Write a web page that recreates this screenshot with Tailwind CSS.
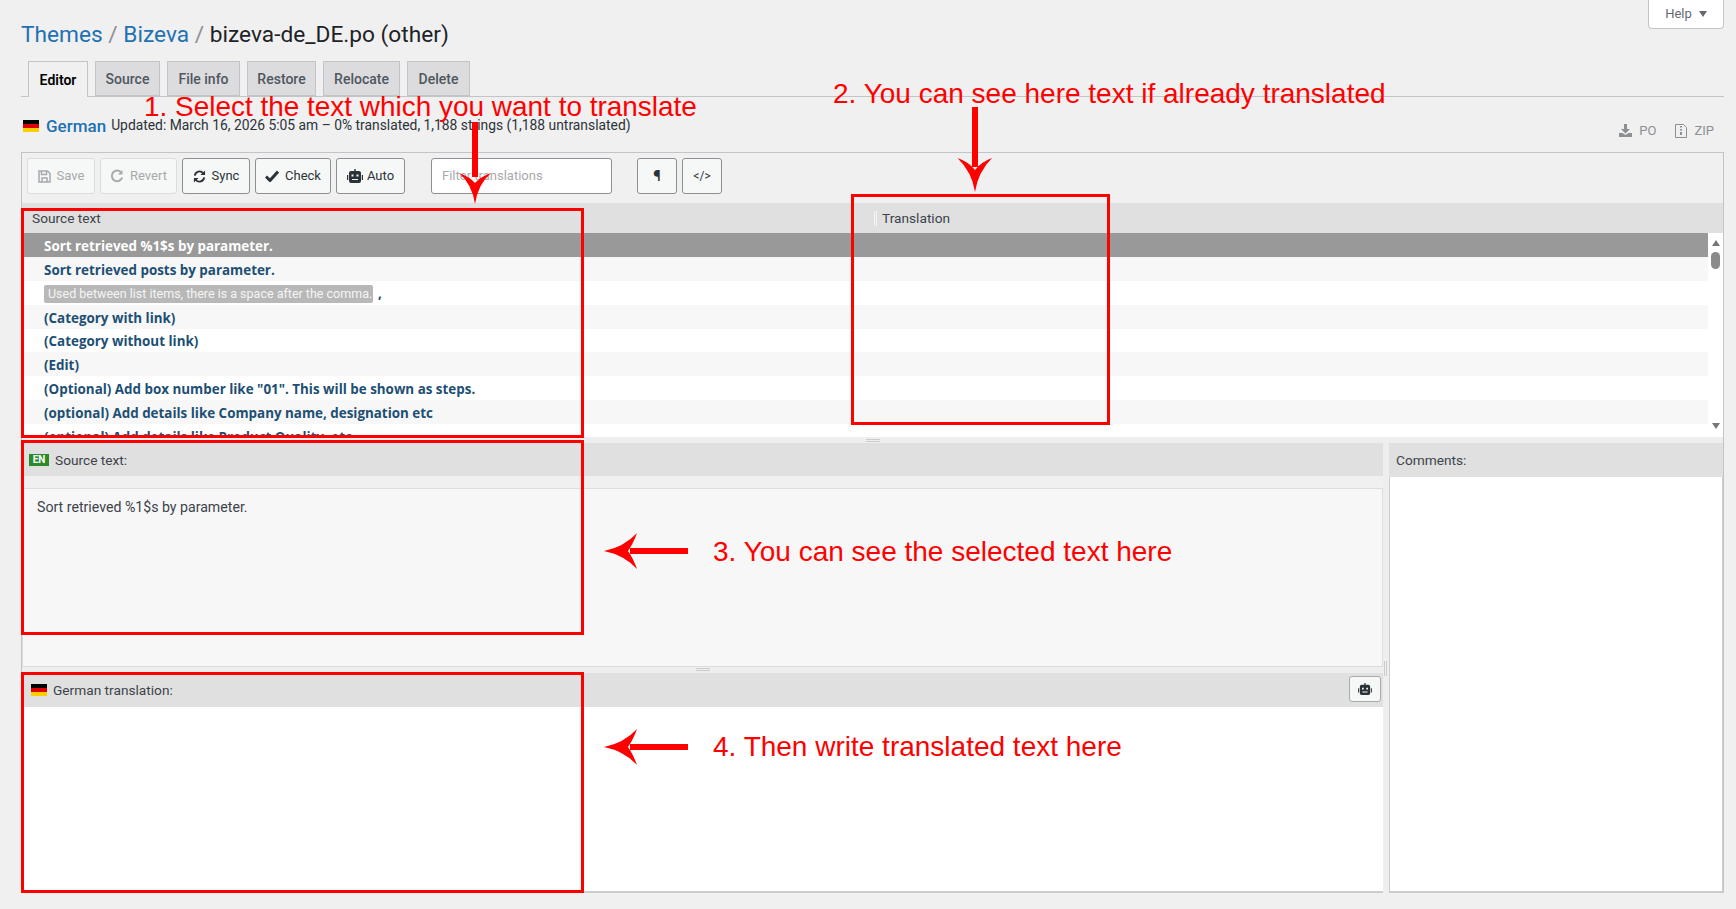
<!DOCTYPE html>
<html lang="en">
<head>
  <meta charset="UTF-8" />
  <title>Edit translation</title>
  <script src="https://cdn.jsdelivr.net/npm/@tailwindcss/browser@4"></script>
</head>
<body class="relative bg-[#f0f0f1] h-[909px] overflow-hidden font-[Roboto,sans-serif] text-[13.7px] text-[#3c434a]">
  <div class="pl-[21px] pr-[12px]">
    <!-- title -->
    <div class="flex justify-between items-start h-[61px]">
      <h1 class="text-[22.7px] leading-[29px] pt-[20px] text-[#1d2327]"><span class="text-[#2271b1]">Themes</span> <span class="text-[#8c8f94]">/</span> <span class="text-[#2271b1]">Bizeva</span> <span class="text-[#8c8f94]">/</span> bizeva-de_DE.po (other)</h1>
      <div class="w-[76px] h-[29px] bg-white border border-t-0 border-[#c3c4c7] rounded-b flex items-center justify-center gap-[7px] text-[13px] text-[#646970]">Help <span class="w-0 h-0 border-x-[4px] border-x-transparent border-t-[6px] border-t-[#646970]"></span></div>
    </div>

    <!-- tabs -->
    <div class="flex gap-[7px] h-[36px] pl-[7px] border-b border-[#c3c4c7] font-medium text-[14px] text-[#50575e]">
      <div class="w-[60px] h-[36px] pt-[2px] bg-[#f0f0f1] border border-b-0 border-[#c3c4c7] flex items-center justify-center font-semibold text-[#000]">Editor</div>
      <div class="w-[65px] h-[35px] pt-[2px] bg-[#dcdcde] border border-[#c3c4c7] flex items-center justify-center">Source</div>
      <div class="w-[73px] h-[35px] pt-[2px] bg-[#dcdcde] border border-[#c3c4c7] flex items-center justify-center">File info</div>
      <div class="w-[69px] h-[35px] pt-[2px] bg-[#dcdcde] border border-[#c3c4c7] flex items-center justify-center">Restore</div>
      <div class="w-[77px] h-[35px] pt-[2px] bg-[#dcdcde] border border-[#c3c4c7] flex items-center justify-center">Relocate</div>
      <div class="w-[63px] h-[35px] pt-[2px] bg-[#dcdcde] border border-[#c3c4c7] flex items-center justify-center">Delete</div>
    </div>

    <!-- locale line -->
    <div class="flex items-center h-[55px] pt-[3px]">
      <span class="flex flex-col w-[16px] h-[12px] ml-[2px] mr-[7px]"><i class="h-[4px] bg-black"></i><i class="h-[4px] bg-[#dd0000]"></i><i class="h-[4px] bg-[#ffce00]"></i></span>
      <span class="text-[17px] font-medium text-[#2271b1] mr-[5px] pt-[1px]">German</span>
      <span class="text-[#2c3338] text-[13.85px] -mt-[1px]">Updated: March 16, 2026 5:05 am – 0% translated, 1,188 strings (1,188 untranslated)</span>
      <div class="ml-auto flex items-center text-[#8c8f94] mr-[10px] mt-[9px] text-[13px]">
        <svg class="w-[13px] h-[13px] mr-[7px]" viewBox="0 0 13 13" fill="#8c8f94"><path d="M5 0h3v5h3L6.500 9.500 2 5h3z"/><path d="M0 9h3.500l3 2 3-2H13v4H0z"/></svg>
        <span class="mr-[19px]">PO</span>
        <svg class="w-[12px] h-[14px] mr-[7px]" viewBox="0 0 12 14" fill="none" stroke="#8c8f94"><path d="M.500.500h8l3 3v10h-11z"/><path d="M5 2h2v1.500H5zM5 5h2v1.500H5zM5 8h2v3H5z" fill="#8c8f94" stroke="none"/></svg>
        <span>ZIP</span>
      </div>
    </div>

    <!-- editor -->
    <div class="h-[741px] border-t border-x border-[#c3c4c7]">
      <div class="flex items-center h-[50px] pb-[4px] pl-[5px] text-[13px]">
        <div class="flex gap-[5px]">
          <button class="flex items-center justify-center gap-[6px] w-[68px] h-[36px] rounded-[3px] border border-[#dcdcde] bg-[#f6f7f7] text-[#a7aaad]">
            <svg class="w-[13px] h-[13px]" viewBox="0 0 13 13" fill="none" stroke="#a7aaad" stroke-width="1.500"><path d="M1 1h8.500L12 3.500V12H1z"/><path d="M3.500 1v3.500h5V1M4 12V8h5v4"/></svg>Save</button>
          <button class="flex items-center justify-center gap-[6px] w-[77px] h-[36px] rounded-[3px] border border-[#dcdcde] bg-[#f6f7f7] text-[#a7aaad]">
            <svg class="w-[14px] h-[14px]" viewBox="0 0 14 14" fill="none" stroke="#a7aaad" stroke-width="2"><path d="M11 3.200A5.300 5.300 0 1 0 12.200 8.500"/><path d="M12.500 1v4.500H8" fill="#a7aaad" stroke="none"/></svg>Revert</button>
          <button class="flex items-center justify-center gap-[6px] w-[68px] h-[36px] rounded-[3px] border border-[#8c8f94] bg-[#f6f7f7] text-[#2c3338]">
            <svg class="w-[13px] h-[13px]" viewBox="0 0 14 14" fill="none" stroke="#2c3338" stroke-width="2"><path d="M2 6a5 5 0 0 1 9-2.500M12 8a5 5 0 0 1-9 2.500"/><path d="M13 .500v5H8zM1 13.500v-5h5z" fill="#2c3338" stroke="none"/></svg>Sync</button>
          <button class="flex items-center justify-center gap-[6px] w-[76px] h-[36px] rounded-[3px] border border-[#8c8f94] bg-[#f6f7f7] text-[#2c3338]">
            <svg class="w-[14px] h-[12px]" viewBox="0 0 14 12" fill="none" stroke="#2c3338" stroke-width="3"><path d="M1 6.500 5 10.500 13 1.500"/></svg>Check</button>
          <button class="flex items-center justify-center gap-[4px] w-[69px] h-[36px] rounded-[3px] border border-[#8c8f94] bg-[#f6f7f7] text-[#2c3338]">
            <svg class="w-[16px] h-[14px]" viewBox="0 0 16 14" fill="#2c3338"><path d="M7.300 0h1.400v2h3.300a2 2 0 0 1 2 2v8a2 2 0 0 1-2 2H4a2 2 0 0 1-2-2V4a2 2 0 0 1 2-2h3.300z"/><path d="M0 6h1.200v5H0zM14.800 6H16v5h-1.200z"/><path d="M4.500 5.500h2v2h-2zM9.500 5.500h2v2h-2zM5 10h6v1H5z" fill="#f6f7f7"/></svg>Auto</button>
        </div>
        <div class="w-[181px] h-[36px] ml-[26px] rounded-[3px] border border-[#8c8f94] bg-white flex items-center pl-[10px] text-[#a7aaad]">Filter translations</div>
        <button class="w-[40px] h-[36px] ml-[25px] rounded-[3px] border border-[#8c8f94] bg-[#f6f7f7] font-bold text-[15px] text-[#2c3338]">¶</button>
        <button class="w-[40px] h-[36px] ml-[5px] rounded-[3px] border border-[#8c8f94] bg-[#f6f7f7] text-[#2c3338] text-[12px]">&lt;/&gt;</button>
      </div>

      <!-- list header -->
      <div class="flex h-[30px] bg-[#e0e0e0] items-center pt-[1px]">
        <div class="w-[852px] pl-[10px]">Source text</div>
        <div class="w-[3px] h-[15px] border-x border-[#f5f5f5]"></div>
        <div class="pl-[5px]">Translation</div>
      </div>

      <!-- list -->
      <div class="flex h-[204px] overflow-hidden font-bold text-[13.4px] font-['Open_Sans',sans-serif] text-[#1d4f74]">
        <div class="flex-1 min-w-0">
          <div class="h-[24px] pl-[22px] pt-[2px] flex items-center bg-[#999999] text-white">Sort retrieved %1$s by parameter.</div>
          <div class="h-[24px] pl-[22px] pt-[2px] flex items-center bg-[#f7f7f7]">Sort retrieved posts by parameter.</div>
          <div class="h-[24px] pl-[22px] pt-[1px] flex items-center bg-white"><span class="h-[18px] w-[329px] bg-[#b8b8b8] rounded-[2px] text-[#f5f5f5] font-normal text-[12.5px] font-[Roboto,sans-serif] pl-[4px] leading-[18px] mr-[5px]">Used between list items, there is a space after the comma.</span>,</div>
          <div class="h-[24px] pl-[22px] pt-[2px] flex items-center bg-[#f7f7f7]">(Category with link)</div>
          <div class="h-[23px] pl-[22px] pt-[2px] flex items-center bg-white">(Category without link)</div>
          <div class="h-[24px] pl-[22px] pt-[2px] flex items-center bg-[#f7f7f7]">(Edit)</div>
          <div class="h-[24px] pl-[22px] pt-[2px] flex items-center bg-white">(Optional) Add box number like "01". This will be shown as steps.</div>
          <div class="h-[24px] pl-[22px] pt-[2px] flex items-center bg-[#f7f7f7]">(optional) Add details like Company name, designation etc</div>
          <div class="h-[24px] pl-[22px] pt-[2px] flex items-center bg-white">(optional) Add details like Product Quality, etc</div>
        </div>
        <!-- scrollbar -->
        <div class="w-[15px] h-[204px] bg-white flex flex-col items-center pt-[7px]">
          <span class="w-0 h-0 border-x-[4.500px] border-x-transparent border-b-[6px] border-b-[#777777]"></span>
          <span class="w-[9px] h-[17px] mt-[6px] rounded-full bg-[#8a8a8a]"></span>
          <span class="w-0 h-0 mt-[154px] border-x-[4.500px] border-x-transparent border-t-[6px] border-t-[#777777]"></span>
        </div>
      </div>

      <!-- splitter -->
      <div class="relative h-[6px] bg-[#eeeeee]"><span class="absolute left-[844px] top-[2px] w-[14px] h-[3px] border-y border-[#cccccc]"></span></div>

      <!-- lower panes -->
      <div class="flex h-[450px]">
        <div class="w-[1361px] flex flex-col">
          <div class="flex items-center h-[33px] bg-[#e0e0e0] pl-[7px] pt-[1px]">
            <span class="w-[20px] h-[12px] bg-[#2a8a2a] text-white font-bold text-[10px] leading-[12px] text-center mr-[6px]">EN</span>Source text:
          </div>
          <div class="h-[12px]"></div>
          <div class="h-[179px] bg-[#f7f7f7] border border-[#dddddd] pl-[14px] pt-[9px] leading-[18px] text-[14.15px]">Sort retrieved %1$s by parameter.</div>
          <div class="relative h-[6px] bg-[#eeeeee]"><span class="absolute left-[674px] top-[1px] w-[14px] h-[3px] border-y border-[#cccccc]"></span></div>
          <div class="flex items-center h-[34px] bg-[#e0e0e0] pl-[9px] pr-[2px]">
            <span class="flex flex-col w-[16px] h-[12px] mr-[6px]"><i class="h-[4px] bg-black"></i><i class="h-[4px] bg-[#dd0000]"></i><i class="h-[4px] bg-[#ffce00]"></i></span>
            <span class="pt-[1px]">German translation:</span>
            <button class="ml-auto w-[32px] h-[26px] mb-[3px] rounded-[3px] border border-[#a7aaad] bg-[#f6f7f7] flex items-center justify-center">
              <svg class="w-[14px] h-[12px]" viewBox="0 0 16 14" fill="#2c3338"><path d="M7.300 0h1.400v2h3.300a2 2 0 0 1 2 2v8a2 2 0 0 1-2 2H4a2 2 0 0 1-2-2V4a2 2 0 0 1 2-2h3.300z"/><path d="M0 6h1.200v5H0zM14.800 6H16v5h-1.200z"/><path d="M4.500 5.500h2v2h-2zM9.500 5.500h2v2h-2zM5 10h6v1H5z" fill="#f6f7f7"/></svg>
            </button>
          </div>
          <div class="flex-1 bg-white border-b-2 border-[#cccccc]"></div>
        </div>
        <div class="relative w-[6px] bg-[#eeeeee]"><span class="absolute left-[1px] top-[218px] w-[3px] h-[15px] border-x border-[#cccccc]"></span></div>
        <div class="flex-1 flex flex-col">
          <div class="flex items-center h-[34px] bg-[#e0e0e0] pl-[7px]">Comments:</div>
          <div class="flex-1 bg-white border-b-2 border-x border-[#cccccc]"></div>
        </div>
      </div>
    </div>
  </div>

  <!-- red annotations drawn over the screenshot -->
  <svg class="absolute left-0 top-0 w-[1736px] h-[909px] pointer-events-none" viewBox="0 0 1736 909" fill="none" stroke="#ff0000" stroke-width="3">
    <rect x="22.500" y="209.500" width="560" height="227"/>
    <rect x="22.500" y="441.500" width="560" height="192"/>
    <rect x="22.500" y="673.500" width="560" height="218"/>
    <rect x="852.500" y="195.500" width="256" height="228"/>
    <g fill="#ff0000" stroke="none">
      <rect x="472" y="122" width="6" height="55"/>
      <path d="M475 204 Q472 184 459 173 Q470 177 475 183 Q480 177 491 173 Q478 184 475 204z"/>
      <rect x="972" y="107" width="6" height="60"/>
      <path d="M975 192 Q972 172 957.500 158 Q969 162 975 170 Q981 162 992 158 Q978 172 975 192z"/>
      <rect x="630" y="548" width="58" height="6"/>
      <path d="M604 551 Q624 547 637 533 Q633 544 628 551 Q633 558 637 569 Q624 555 604 551z"/>
      <rect x="630" y="744" width="58" height="6"/>
      <path d="M604 747 Q624 743 637 729 Q633 740 628 747 Q633 754 637 765 Q624 751 604 747z"/>
    </g>
  </svg>
  <span class="absolute left-[144px] top-[91px] text-[27.95px] leading-[32px] text-[#ff0000] font-['Liberation_Sans',sans-serif] whitespace-nowrap">1. Select the text which you want to translate</span>
  <span class="absolute left-[833px] top-[78px] text-[28px] leading-[32px] text-[#ff0000] font-['Liberation_Sans',sans-serif] whitespace-nowrap">2. You can see here text if already translated</span>
  <span class="absolute left-[713px] top-[536px] text-[28px] leading-[32px] text-[#ff0000] font-['Liberation_Sans',sans-serif] whitespace-nowrap">3. You can see the selected text here</span>
  <span class="absolute left-[713px] top-[731px] text-[28px] leading-[32px] text-[#ff0000] font-['Liberation_Sans',sans-serif] whitespace-nowrap">4. Then write translated text here</span>
</body>
</html>
